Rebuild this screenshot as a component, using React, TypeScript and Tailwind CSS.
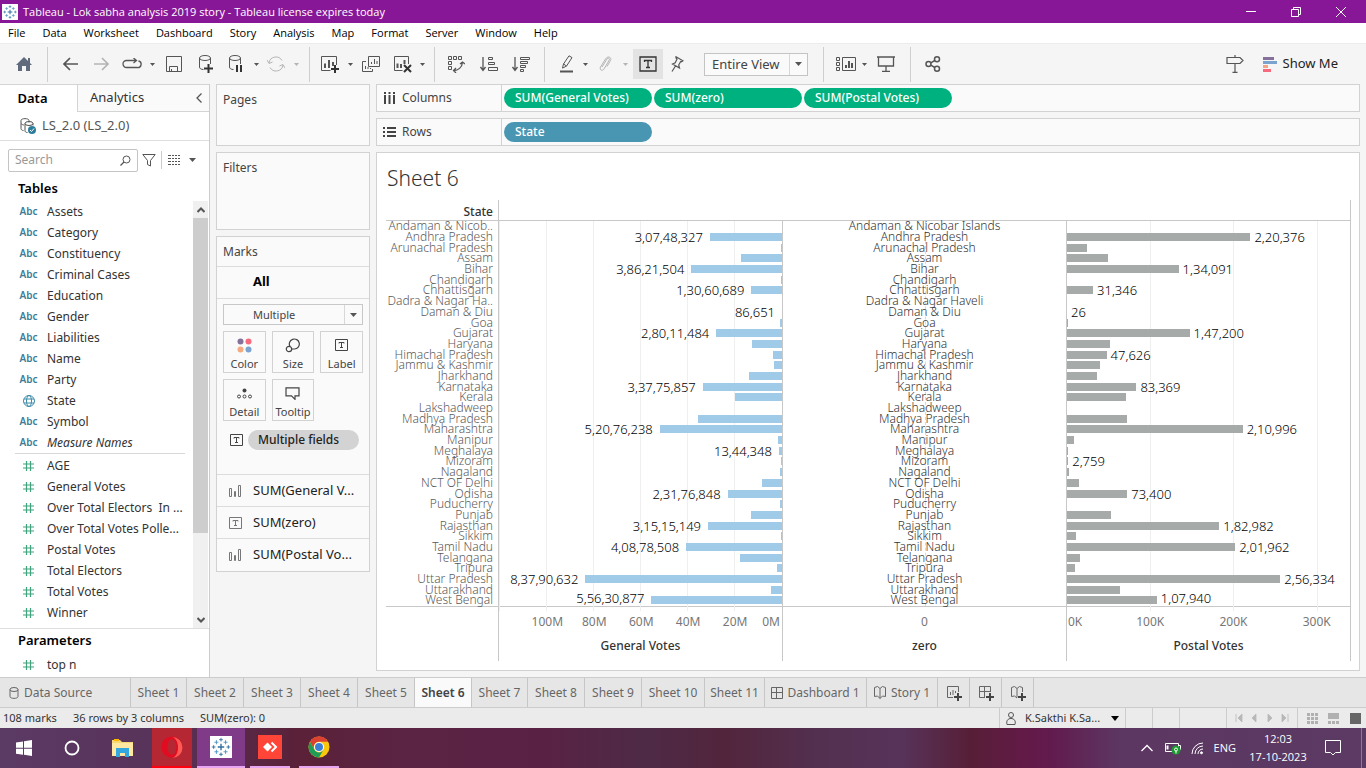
import React, { useState } from "react";

type Row = { state: string; short?: string; general: number; generalLabel?: string; postal: number; postalLabel?: string };

const rows: Row[] = [
  { state: "Andaman & Nicobar Islands", short: "Andaman & Nicob..", general: 0, postal: 0 },
  { state: "Andhra Pradesh", general: 30.75, generalLabel: "3,07,48,327", postal: 220.4, postalLabel: "2,20,376" },
  { state: "Arunachal Pradesh", general: 0.6, postal: 24 },
  { state: "Assam", general: 17.6, postal: 49 },
  { state: "Bihar", general: 38.62, generalLabel: "3,86,21,504", postal: 134.1, postalLabel: "1,34,091" },
  { state: "Chandigarh", general: 0.5, postal: 0 },
  { state: "Chhattisgarh", general: 13.06, generalLabel: "1,30,60,689", postal: 31.3, postalLabel: "31,346" },
  { state: "Dadra & Nagar Haveli", short: "Dadra & Nagar Ha..", general: 0, postal: 0 },
  { state: "Daman & Diu", general: 0, generalLabel: "86,651", postal: 0, postalLabel: "26" },
  { state: "Goa", general: 0.9, postal: 1.3 },
  { state: "Gujarat", general: 28.01, generalLabel: "2,80,11,484", postal: 147.2, postalLabel: "1,47,200" },
  { state: "Haryana", general: 12.6, postal: 51.5 },
  { state: "Himachal Pradesh", general: 3.8, postal: 47.6, postalLabel: "47,626" },
  { state: "Jammu & Kashmir", general: 3.5, postal: 39.4 },
  { state: "Jharkhand", general: 14.2, postal: 35.8 },
  { state: "Karnataka", general: 33.78, generalLabel: "3,37,75,857", postal: 83.4, postalLabel: "83,369" },
  { state: "Kerala", general: 20.2, postal: 70.9 },
  { state: "Lakshadweep", general: 0, postal: 0 },
  { state: "Madhya Pradesh", general: 36, postal: 72 },
  { state: "Maharashtra", general: 52.08, generalLabel: "5,20,76,238", postal: 211, postalLabel: "2,10,996" },
  { state: "Manipur", general: 1.7, postal: 8.5 },
  { state: "Meghalaya", general: 1.34, generalLabel: "13,44,348", postal: 1.3 },
  { state: "Mizoram", general: 0.5, postal: 1.5, postalLabel: "2,759" },
  { state: "Nagaland", general: 1, postal: 2.4 },
  { state: "NCT OF Delhi", general: 8.7, postal: 14.3 },
  { state: "Odisha", general: 23.18, generalLabel: "2,31,76,848", postal: 72.4, postalLabel: "73,400" },
  { state: "Puducherry", general: 0.8, postal: 0 },
  { state: "Punjab", general: 13.4, postal: 52.9 },
  { state: "Rajasthan", general: 31.52, generalLabel: "3,15,15,149", postal: 183, postalLabel: "1,82,982" },
  { state: "Sikkim", general: 0.4, postal: 10.7 },
  { state: "Tamil Nadu", general: 40.88, generalLabel: "4,08,78,508", postal: 202, postalLabel: "2,01,962" },
  { state: "Telangana", general: 18.1, postal: 15.7 },
  { state: "Tripura", general: 2.2, postal: 9.5 },
  { state: "Uttar Pradesh", general: 83.79, generalLabel: "8,37,90,632", postal: 256.3, postalLabel: "2,56,334" },
  { state: "Uttarakhand", general: 4.8, postal: 63.5 },
  { state: "West Bengal", general: 55.63, generalLabel: "5,56,30,877", postal: 107.9, postalLabel: "1,07,940" },
];

const GENERAL_MAX = 120.6;
const POSTAL_MAX = 340;

const Ico = ({ w = 20, h = 20, children, className = "" }: { w?: number; h?: number; children: React.ReactNode; className?: string }) => (
  <svg width={w} height={h} viewBox={`0 0 ${w} ${h}`} fill="none" stroke="currentColor" strokeWidth="1" className={`shrink-0 ${className}`} aria-hidden="true">
    {children}
  </svg>
);

const Caret = ({ label, className = "" }: { label: string; className?: string }) => (
  <button aria-label={label} className={`flex w-4 items-center justify-center ${className}`}>
    <svg width="5" height="3" viewBox="0 0 5 3" fill="currentColor" aria-hidden="true"><path d="M0 0h5L2.500 3z" /></svg>
  </button>
);

const TableauMark = ({ size }: { size: number }) => (
  <svg width={size} height={size} viewBox="0 0 24 24" className="shrink-0" aria-hidden="true">
    <rect width="24" height="24" fill="#fff" />
    <g fill="none" stroke="#2f6f9f" strokeWidth="1">
      <path d="M12 8.500v7M8.500 12h7" strokeWidth="1.500" />
      <path d="M12 2v4M10 4h4M12 18v4M10 20h4M4 10v4M2 12h4M20 10v4M18 12h4" />
      <path d="M7 4.500v4.500M4.800 6.800h4.400M17 4.500v4.500M14.800 6.800h4.400M7 15v4.500M4.800 17.200h4.400M17 15v4.500M14.800 17.200h4.400" stroke="#4b93c4" />
    </g>
  </svg>
);

const TitleBar = () => (
  <header className="flex h-[23px] shrink-0 items-center bg-[#881798] pl-[2px] text-[11px] text-white">
    <TableauMark size={16} />
    <h1 className="ml-[5px] flex-1 leading-4">Tableau - Lok sabha analysis 2019 story - Tableau license expires today</h1>
    <button aria-label="Minimize" className="flex h-full w-[45px] items-center justify-center"><Ico w={10} h={10}><path d="M0 4.500h10" /></Ico></button>
    <button aria-label="Restore" className="flex h-full w-[45px] items-center justify-center"><Ico w={10} h={10}><path d="M.5 2.500h7v7h-7zM2.500 2.500v-2h7v7h-2" /></Ico></button>
    <button aria-label="Close" className="mr-[2px] flex h-full w-[46px] items-center justify-center"><Ico w={10} h={10}><path d="M0 0l10 10M10 0L0 10" /></Ico></button>
  </header>
);

const menus = ["File", "Data", "Worksheet", "Dashboard", "Story", "Analysis", "Map", "Format", "Server", "Window", "Help"];

const MenuBar = () => (
  <nav className="flex h-5 shrink-0 items-center gap-[17px] bg-white pt-px pl-2 text-[11px] text-black">
    {menus.map((m) => <button key={m}>{m}</button>)}
  </nav>
);

const ToolButton = ({ label, className, children }: { label: string; className: string; children: React.ReactNode }) => (
  <button aria-label={label} className={`flex shrink-0 items-center justify-center ${className}`}>{children}</button>
);
const Sep = ({ className = "" }: { className?: string }) => <span className={`h-[35px] w-px shrink-0 bg-[#cfcfcf] ${className}`} />;

const Toolbar = () => (
  <div className="flex h-[41px] shrink-0 items-center border-t border-[#ececec] bg-[#f5f5f5] text-[#555]">
    <ToolButton label="Home" className="w-[47px]">
      <Ico w={18} h={16}><path d="M9 1L1 9h2v6h4v-5h4v5h4V9h2L15 7V2h-2v3z" fill="#5f6b7c" stroke="none" /></Ico>
    </ToolButton>
    <Sep />
    <ToolButton label="Undo" className="ml-2 w-7"><Ico w={16} h={14}><path d="M16 7H2M8 1L2 7l6 6" strokeWidth="1.700" /></Ico></ToolButton>
    <ToolButton label="Redo" className="ml-1 w-7 text-[#b4b4b4]"><Ico w={16} h={14}><path d="M0 7h14M8 1l6 6-6 6" strokeWidth="1.700" /></Ico></ToolButton>
    <ToolButton label="Replay" className="ml-1 w-6"><Ico w={20} h={12}><path d="M6 9.500H4.500a3.500 3.500 0 010-7H14M11.500 0l3 2.500-3 2.500M16.500 3a3.300 3.300 0 01-1.500 6.500H5" strokeWidth="1.300" /></Ico></ToolButton>
    <Caret label="Replay options" />
    <ToolButton label="Save" className="w-7"><Ico w={16} h={16}><path d="M.5.5h15v15H.5zM3.500 15.500v-5h8v5M5.500 15v-2" /></Ico></ToolButton>
    <ToolButton label="New data source" className="ml-1 w-7">
      <Ico w={16} h={20}><ellipse cx="7" cy="4" rx="5.500" ry="2.500" /><path d="M1.500 4v9c0 1.500 1.500 2.500 4 2.500M12.500 4v6" /><path d="M6 14.500h9M10.500 10v9" stroke="#333" strokeWidth="2" /></Ico>
    </ToolButton>
    <ToolButton label="Pause updates" className="ml-1 w-6">
      <Ico w={14} h={20}><ellipse cx="6" cy="4" rx="5.500" ry="2.500" /><path d="M.5 4v9c0 1.500 1.500 2.500 4 2.500M11.500 4v6" /><path d="M8 11v7M12 11v7" stroke="#333" strokeWidth="2" /></Ico>
    </ToolButton>
    <Caret label="Pause options" />
    <ToolButton label="Refresh" className="w-6 text-[#b4b4b4]">
      <Ico w={18} h={16}><path d="M2 7a7 7 0 0113-2.500M16 9a7 7 0 01-13 2.500M0 4l2 3.500L5.500 6M18 12l-2-3.500-3.500 1.500" /></Ico>
    </ToolButton>
    <Caret label="Refresh options" className="text-[#b4b4b4]" />
    <Sep className="ml-[5px]" />
    <ToolButton label="New worksheet" className="ml-2 w-6">
      <Ico w={20} h={18}><path d="M16.500 10V1.500H1.500v14h9" /><path d="M5 8.500V13M9 5v8M13 7v4" strokeWidth="2" /><path d="M11 14h8M15 10v8" stroke="#333" strokeWidth="2" /></Ico>
    </ToolButton>
    <Caret label="New worksheet options" />
    <ToolButton label="Duplicate" className="ml-px w-6">
      <Ico w={18} h={16}><path d="M6.500.5h11v10h-11zM4 5.500H.5v10h10V13" /><path d="M9.500 8V6M12.500 8V3M15 8V5M3.500 13v-3M6 13v-2M8.500 13v-1" /></Ico>
    </ToolButton>
    <ToolButton label="Clear sheet" className="ml-[6px] w-7">
      <Ico w={20} h={18}><path d="M15.500 9V1.500H1.500v14h8" /><path d="M4.500 8.500V13M8 9v4M11.500 5v4" strokeWidth="2" /><path d="M11 10l7 7M18 10l-7 7" stroke="#333" strokeWidth="2" /></Ico>
    </ToolButton>
    <Caret label="Clear options" className="-ml-[3px]" />
    <Sep className="ml-1" />
    <ToolButton label="Swap rows and columns" className="ml-[7px] w-7">
      <Ico w={18} h={18}><path d="M1.500 1.500h3v3h-3zM6.500 1.500h3v3h-3zM11.500 1.500h3v3h-3zM1.500 6.500h3v3h-3zM1.500 11.500h3v3h-3z" /><path d="M7 15.500c4 0 8-3 8.500-8M13 9l2.500-2L18 9M9 13l-2.500 2.500L9 18" strokeWidth="1.300" /></Ico>
    </ToolButton>
    <ToolButton label="Sort ascending" className="ml-[5px] w-7">
      <Ico w={18} h={16}><path d="M3 1v12M.5 11L3 14.500 5.500 11" strokeWidth="1.300" /><path d="M8.500 1.500h4v2h-4zM8.500 6.500h6v2h-6zM8.500 11.500h9v3h-9z" /></Ico>
    </ToolButton>
    <ToolButton label="Sort descending" className="ml-1 w-7">
      <Ico w={18} h={16}><path d="M3 1v12M.5 11L3 14.500 5.500 11" strokeWidth="1.300" /><path d="M8.500 1.500h9v2h-9zM8.500 5.500h7v2h-7zM8.500 9.500h5v2h-5zM8.500 13.500h3v2h-3z" /></Ico>
    </ToolButton>
    <Sep className="ml-[9px]" />
    <ToolButton label="Highlight" className="ml-2 w-7">
      <Ico w={14} h={18}><path d="M2.500 13l1-4L9 .8l3 1.800-5.500 8.500-4 2zM3.500 9l3 2" /><path d="M0 16.500h13" strokeWidth="2" /></Ico>
    </ToolButton>
    <Caret label="Highlight options" className="-ml-1" />
    <ToolButton label="Group members" className="w-6 text-[#b4b4b4]">
      <Ico w={14} h={16}><path d="M4 11l5-8c1-1.500 3-.5 2.300 1L6 13c-1.500 2.500-5 1-3.500-2l5-8C9.500-.5 14 1 12.500 4.500L9 10.500" /></Ico>
    </ToolButton>
    <Caret label="Group options" className="text-[#b4b4b4]" />
    <ToolButton label="Show mark labels" className="h-[30px] w-[30px] bg-[#e3e3e3] text-[#333]">
      <Ico w={18} h={16}><path d="M1 1h16v14H1zM5.500 6V4.500h7V6M9 4.500v7M7 11.500h4" strokeWidth="1.300" /></Ico>
    </ToolButton>
    <ToolButton label="Fix axes" className="w-7">
      <Ico w={14} h={16}><path d="M6 .8l7 4-1.500 1-.8-.3-2 3.500.8 3-7-4 2.700-1.300L7 3 6 2zM5.500 10L2 15.500" strokeWidth="1.200" /></Ico>
    </ToolButton>
    <div className="relative ml-[13px] h-[23px] w-[104px] shrink-0 border border-[#c4c4c4] bg-[#fafafa]">
      <select aria-label="Fit" className="block h-full w-full appearance-none bg-transparent pl-[7px] text-[13px] leading-5 text-[#444]"><option>Entire View</option></select>
      <span className="pointer-events-none absolute inset-y-0 right-0 flex w-[18px] items-center justify-center border-l border-[#d8d8d8]">
        <svg width="7" height="4" viewBox="0 0 7 4" fill="#555" aria-hidden="true"><path d="M0 0h7L3.500 4z" /></svg>
      </span>
    </div>
    <Sep className="ml-[15px]" />
    <ToolButton label="Show or hide cards" className="ml-2 w-7">
      <Ico w={20} h={16}><path d="M.5 1.500h3v3h-3zM.5 6.500h3v3h-3zM.5 11.500h3v3h-3zM6.500 1.500h13v13h-13z" /><path d="M10 12V9M13 12V5M16 12V7" strokeWidth="2" /></Ico>
    </ToolButton>
    <Caret label="Card options" className="-ml-1" />
    <ToolButton label="Presentation mode" className="w-7"><Ico w={18} h={16}><path d="M0 1h18M1.500 1v9h15V1M9 10v5M5 15.500h8" strokeWidth="1.300" /></Ico></ToolButton>
    <Sep className="ml-[10px]" />
    <ToolButton label="Share" className="ml-2 w-7"><Ico w={16} h={16}><g strokeWidth="1.500"><circle cx="3.500" cy="8" r="2.500" /><circle cx="12" cy="3.300" r="2.500" /><circle cx="12" cy="12.700" r="2.500" /><path d="M5.800 6.800L9.800 4.500M5.800 9.200l4 2.300" /></g></Ico></ToolButton>
    <ToolButton label="Data guide" className="mr-[14px] ml-auto w-7">
      <Ico w={18} h={18}><path d="M1 2.500h13l3 3-3 3H1zM9 0v2.500M9 8.500V17M6.500 17.300h5" strokeWidth="1.200" /></Ico>
    </ToolButton>
    <button className="mr-7 flex items-center gap-[6px] text-[13px] text-[#222]">
      <Ico w={14} h={15}><g stroke="none"><path d="M0 0h11v3H0z" fill="#85709a" /><path d="M0 4h14v3H0z" fill="#7ba3cf" /><path d="M0 8h5v3H0z" fill="#f4a582" /><path d="M0 12h8v3H0z" fill="#f8697d" /></g></Ico>
      Show Me
    </button>
  </div>
);

const dims: { kind: "abc" | "globe"; name: string; italic?: boolean }[] = [
  { kind: "abc", name: "Assets" }, { kind: "abc", name: "Category" }, { kind: "abc", name: "Constituency" },
  { kind: "abc", name: "Criminal Cases" }, { kind: "abc", name: "Education" }, { kind: "abc", name: "Gender" },
  { kind: "abc", name: "Liabilities" }, { kind: "abc", name: "Name" }, { kind: "abc", name: "Party" },
  { kind: "globe", name: "State" }, { kind: "abc", name: "Symbol" }, { kind: "abc", name: "Measure Names", italic: true },
];
const measures = ["AGE", "General Votes", "Over Total Electors  In ...", "Over Total Votes Polle...", "Postal Votes", "Total Electors", "Total Votes", "Winner"];

const Hash = () => <Ico w={12} h={10} className="text-[#3fa37c]"><path d="M3.500 0v10M7.500 0v10M0 3h11M0 7h11" strokeWidth="1.200" /></Ico>;

const Field = ({ icon, children }: { icon: React.ReactNode; children: React.ReactNode }) => (
  <li className="flex h-[21px] items-center text-xs">
    <span className="flex w-[37px] shrink-0 justify-center">{icon}</span>
    <span className="flex-1 whitespace-pre">{children}</span>
  </li>
);

const DataPane = () => (
  <aside className="flex w-[210px] shrink-0 flex-col border-r border-[#cccccc] bg-white text-[13px] text-[#333]">
    <div className="flex h-7 shrink-0">
      <button className="w-[77px] border-t border-[#d4d4d4] pr-4 pl-1 font-semibold text-black">Data</button>
      <div className="flex flex-1 items-center justify-between border border-r-0 border-[#d4d4d4] bg-[#fafafa]">
        <button className="pl-3">Analytics</button>
        <button aria-label="Collapse" className="flex w-5 justify-center text-[#555]"><Ico w={6} h={10}><path d="M5.500.5L1 5l4.500 4.500" strokeWidth="1.300" /></Ico></button>
      </div>
    </div>
    <div className="flex h-[29px] shrink-0 items-center gap-1 border-b border-[#dedede] pb-px pl-5 text-[#555]">
      <Ico w={18} h={18}>
        <path d="M1 3.500C1 1 9 1 9 3.500v2M1 3.500v8c0 1 1 2 2.500 2M1 6.500c1 1 2 1.500 3 1.500" /><ellipse cx="9" cy="6.500" rx="4" ry="2" /><path d="M5 6.500v7c0 1.500 1 2 2.500 2M13 6.500v2" />
        <circle cx="12" cy="13" r="4" fill="#2e7d9c" stroke="none" /><path d="M10 13l1.500 1.500L14 11.500" stroke="#fff" />
      </Ico>
      LS_2.0 (LS_2.0)
    </div>
    <div className="mt-[7px] flex h-6 shrink-0 items-center pl-2 text-[#555]">
      <label className="flex h-[23px] w-[130px] items-center rounded-xs border border-[#c4c4c4] pr-[6px] pl-[6px] text-xs">
        <input type="text" aria-label="Search fields" placeholder="Search" className="w-full min-w-0 flex-1 bg-transparent placeholder:text-[#999]" />
        <Ico w={11} h={11}><circle cx="6.500" cy="4.500" r="3.500" /><path d="M4 7L.5 10.500" strokeWidth="1.300" /></Ico>
      </label>
      <button aria-label="Filter fields" className="ml-1"><Ico w={14} h={13}><path d="M.8.500h12.400L8.500 6.500v5.500l-3-1.500v-4z" /></Ico></button>
      <span className="ml-[5px] h-[18px] w-px bg-[#ccc]" />
      <button aria-label="View as list" className="ml-[6px]"><Ico w={12} h={10}><path d="M0 .5h12M0 3.500h12M0 6.500h12M0 9.500h12" strokeDasharray="3 1 2 1 2 1 2" /></Ico></button>
      <button aria-label="Menu" className="ml-[9px]"><svg width="7" height="4" viewBox="0 0 7 4" fill="currentColor" aria-hidden="true"><path d="M0 0h7L3.500 4z" /></svg></button>
    </div>
    <h2 className="mt-[6px] h-[23px] shrink-0 pl-[18px] leading-5 font-semibold text-black">Tables</h2>
    <div className="flex min-h-0 flex-1">
      <div className="min-w-0 flex-1 pl-[10px]">
        <ul>
          {dims.map((d) => (
            <Field key={d.name} icon={d.kind === "abc"
              ? <span className="text-[10px] font-semibold text-[#3c7d99]">Abc</span>
              : <Ico w={12} h={12} className="text-[#3c8aa8]"><circle cx="6" cy="6" r="5.500" /><ellipse cx="6" cy="6" rx="2.500" ry="5.500" /><path d="M1 4h10M1 8h10" /></Ico>}>
              <span className={d.italic ? "italic" : ""}>{d.name}</span>
            </Field>
          ))}
        </ul>
        <hr className="mr-2 mb-px ml-[5px] border-[#d8d8d8]" />
        <ul>{measures.map((m) => <Field key={m} icon={<Hash />}>{m}</Field>)}</ul>
      </div>
      <div className="mr-px flex w-[15px] flex-col bg-[#f0f0f0] text-[#555]">
        <button aria-label="Scroll up" className="flex h-[17px] items-center justify-center"><Ico w={8} h={6}><path d="M.5 5L4 1.500 7.500 5" strokeWidth="2" /></Ico></button>
        <span className="h-[315px] bg-[#cdcdcd]" />
        <button aria-label="Scroll down" className="mt-auto flex h-[17px] items-center justify-center"><Ico w={8} h={6}><path d="M.5 1L4 4.500 7.500 1" strokeWidth="2" /></Ico></button>
      </div>
    </div>
    <section className="h-[49px] shrink-0 border-t border-[#dedede]">
      <h2 className="h-[25px] pl-[18px] leading-[22px] font-semibold text-black">Parameters</h2>
      <ul className="pl-[10px]"><Field icon={<Hash />}>top n</Field></ul>
    </section>
  </aside>
);

const card = "border border-[#d2d2d2] bg-[#fafafa]";

const TBox = () => <Ico w={13} h={12}><path d="M.5.5h12v11H.5zM4 4.500v-1h5v1M6.500 3.500v5M5 8.500h3" /></Ico>;
const BarsIco = () => <Ico w={14} h={12}><path d="M1.500 3.500h2v8h-2zM6.500 6.500h1v5h-1zM10.500.5h2v11h-2z" /></Ico>;

const MarkButton = ({ label, children }: { label: string; children: React.ReactNode }) => (
  <button className="flex h-[42px] flex-col items-center justify-between border border-[#d2d2d2] pt-[5px] text-[11px] leading-4">
    <span className="flex h-4 items-center">{children}</span>
    {label}
  </button>
);

const Cards = () => (
  <div className="ml-[6px] flex w-[154px] shrink-0 flex-col gap-[6px] text-[12px] text-[#444]">
    <section className={`h-[62px] px-[6px] pt-[6px] ${card}`}><h2 className="leading-[18px]">Pages</h2></section>
    <section className={`h-[78px] px-[6px] pt-[6px] ${card}`}><h2 className="leading-[18px]">Filters</h2></section>
    <section className={card}>
      <h2 className="h-[30px] border-b border-[#dcdcdc] px-[6px] leading-[30px]">Marks</h2>
      <div className="h-8 border-b border-[#dcdcdc] pl-9 text-[13px] leading-7 font-bold text-black">All</div>
      <div className="h-[176px] border-b border-[#dcdcdc] px-[6px] pt-[5px]">
        <div className="relative h-[21px] border border-[#c8c8c8]">
          <select aria-label="Mark type" className="block h-full w-full appearance-none bg-transparent pl-[29px] text-[11px] leading-4"><option>Multiple</option></select>
          <span className="pointer-events-none absolute inset-y-0 right-0 flex w-[18px] items-center justify-center border-l border-[#d8d8d8]">
            <svg width="7" height="4" viewBox="0 0 7 4" fill="#555" aria-hidden="true"><path d="M0 0h7L3.500 4z" /></svg>
          </span>
        </div>
        <div className="mt-[6px] grid grid-cols-3 gap-[6px]">
          <MarkButton label="Color"><Ico w={15} h={15}><g stroke="none"><circle cx="3.500" cy="3.500" r="3" fill="#85709a" /><circle cx="11.500" cy="3.500" r="3" fill="#f8697d" /><circle cx="3.500" cy="11.500" r="3" fill="#f4a97f" /><circle cx="11.500" cy="11.500" r="3" fill="#7ba3cf" /></g></Ico></MarkButton>
          <MarkButton label="Size"><Ico w={16} h={15}><path d="M5 8.500A5 5 0 119.500 11H7" strokeWidth="1.200" /><circle cx="4" cy="11" r="2.700" strokeWidth="1.200" /></Ico></MarkButton>
          <MarkButton label="Label"><TBox /></MarkButton>
          <MarkButton label="Detail"><Ico w={15} h={13}><circle cx="7.500" cy="3.500" r="2" fill="currentColor" stroke="none" /><circle cx="2" cy="9.500" r="1.500" /><circle cx="7.500" cy="9.500" r="1.500" /><circle cx="13" cy="9.500" r="1.500" /></Ico></MarkButton>
          <MarkButton label="Tooltip"><Ico w={15} h={13}><path d="M1 .8h13v8h-4v3.500L6.500 8.800H1z" strokeWidth="1.200" /></Ico></MarkButton>
        </div>
        <div className="mt-[9px] flex items-center gap-[5px] pl-[7px]">
          <TBox />
          <button className="h-5 w-[111px] rounded-full bg-[#d3d3d3] pr-[10px] font-medium text-[#222]">Multiple fields</button>
        </div>
      </div>
      {[["bars", "SUM(General V..."], ["text", "SUM(zero)"], ["bars", "SUM(Postal Vo..."]].map(([kind, label]) => (
        <div key={label} className="flex h-8 items-center border-b border-[#dcdcdc] text-[13px] text-[#222] last:border-b-0">
          <span className="flex w-9 justify-center text-[#777]">{kind === "bars" ? <BarsIco /> : <TBox />}</span>
          {label}
        </div>
      ))}
    </section>
  </div>
);

const Shelf = ({ label, icon, pills, color }: { label: string; icon: React.ReactNode; pills: string[]; color: string }) => (
  <section className={`flex h-7 shrink-0 ${card}`}>
    <h2 className="flex w-[125px] shrink-0 items-center gap-[6px] border-r border-[#d2d2d2] pl-[6px] text-[12px] text-[#444]">{icon}{label}</h2>
    <div className="flex items-center gap-[2px] pl-[2px]">
      {pills.map((p) => <button key={p} className={`h-5 w-[148px] rounded-full pl-[11px] text-left text-[12px] font-medium text-white ${color}`}>{p}</button>)}
    </div>
  </section>
);

const gridlines = (side: "left" | "right", max: number, ticks: number[]) =>
  ticks.map((t) => (
    <span key={t} className="absolute top-0 -bottom-[5px] w-px bg-[#efefef]" style={{ [side]: `${(t / max) * 100}%` }} />
  ));

const COLS = "grid grid-cols-[113px_1fr_1fr_1fr]";

const Chart = () => (
  <div className="flex min-h-0 flex-1 flex-col text-[12px]">
    <div className={`h-5 ${COLS}`}>
      <div className="border-r border-[#c8c8c8] pr-[5px] text-right leading-6 font-medium text-[#333]">State</div>
      <div className="col-span-3 border-r border-[#c8c8c8]" />
    </div>
    <div className={`relative min-h-0 flex-1 border-y border-[#c8c8c8] ${COLS}`}>
      <div className="flex min-h-0 flex-col border-r border-[#c8c8c8] pr-[5px] text-right font-light text-[#5a5a5a]">
        {rows.map((r) => <div key={r.state} className="flex min-h-0 flex-1 items-center justify-end leading-3 whitespace-nowrap">{r.short ?? r.state}</div>)}
      </div>
      <div className="relative flex min-h-0 flex-col border-r border-[#c8c8c8]">
        {gridlines("right", GENERAL_MAX, [20, 40, 60, 80, 100, 120])}
        {rows.map((r) => (
          <div key={r.state} className="relative flex min-h-0 flex-1 items-center justify-end gap-[7px] last:items-end">
            {r.generalLabel && <span className="text-[13px] leading-4 font-light text-black">{r.generalLabel}</span>}
            <span className="h-2 self-center bg-[#9fcae8]" style={{ width: `${(r.general / GENERAL_MAX) * 100}%` }} />
          </div>
        ))}
      </div>
      <div className="relative flex min-h-0 flex-col border-r border-[#c8c8c8] font-light text-[#333]">
        <span className="absolute inset-y-0 left-1/2 border-l border-dashed border-[#d8d8d8]" />
        {rows.map((r) => <div key={r.state} className="relative flex min-h-0 flex-1 items-center justify-center leading-3 whitespace-nowrap">{r.state}</div>)}
      </div>
      <div className="relative flex min-h-0 flex-col border-r border-[#c8c8c8]">
        {gridlines("left", POSTAL_MAX, [100, 200, 300])}
        {rows.map((r) => (
          <div key={r.state} className="relative flex min-h-0 flex-1 items-center gap-1 last:items-end">
            <span className="h-2 self-center bg-[#a6abaa]" style={{ width: `${(r.postal / POSTAL_MAX) * 100}%` }} />
            {r.postalLabel && <span className="text-[13px] leading-4 font-light text-black">{r.postalLabel}</span>}
          </div>
        ))}
      </div>
    </div>
    <div className={`h-[54px] ${COLS} text-center text-[#777]`}>
      <div className="border-r border-[#c8c8c8]" />
      <div className="relative border-r border-[#c8c8c8] pt-[31px]">
        {[20, 40, 60, 80, 100].map((t) => <span key={t} className="absolute top-[7px] w-12 translate-x-1/2 leading-4" style={{ right: `${(t / GENERAL_MAX) * 100}%` }}>{t}M</span>)}
        <span className="absolute top-[7px] right-[2px] leading-4">0M</span>
        <div className="leading-4 font-medium text-[#333]">General Votes</div>
      </div>
      <div className="border-r border-[#c8c8c8] pt-[7px]">
        <div className="leading-4">0</div>
        <div className="mt-2 leading-4 font-medium text-[#333]">zero</div>
      </div>
      <div className="relative border-r border-[#c8c8c8] pt-[31px]">
        {[100, 200, 300].map((t) => <span key={t} className="absolute top-[7px] w-12 -translate-x-1/2 leading-4" style={{ left: `${(t / POSTAL_MAX) * 100}%` }}>{t}K</span>)}
        <span className="absolute top-[7px] left-px leading-4">0K</span>
        <div className="leading-4 font-medium text-[#333]">Postal Votes</div>
      </div>
    </div>
  </div>
);

const Plus = () => <path d="M9 13h8M13 9v8" stroke="#444" strokeWidth="2" />;
const GridIco = () => <Ico w={12} h={12}><path d="M.5.5h11v11H.5zM5.500.5v11M.5 5.500h11" /></Ico>;
const BookIco = () => <Ico w={12} h={13}><path d="M.5 1.500L3.500.5 6 2.500 8.500.5l3 1v9l-3-.5L6 12.500 3.500 10l-3 .5zM6 2.500v10" /></Ico>;
const tab = "flex shrink-0 items-center justify-center border-r border-[#c6c6c6]";
const sheetWidth = (n: number) => (n === 10 ? "w-[63px]" : n === 11 ? "w-[60px]" : n === 1 || n === 7 ? "w-[56px]" : "w-[57px]");

const SheetTabs = () => {
  const [active, setActive] = useState(6);
  return (
    <nav className="flex h-[31px] shrink-0 border-y border-[#cccccc] bg-[#e6e6e6] text-[12px] text-[#666]">
      <button className={`${tab} w-[131px] !justify-start gap-[5px] pl-[9px]`}>
        <Ico w={10} h={12}><ellipse cx="5" cy="2.500" rx="4" ry="2" /><path d="M1 2.500v7c0 2.500 8 2.500 8 0v-7" /></Ico>Data Source
      </button>
      {Array.from({ length: 11 }, (_, i) => i + 1).map((n) => (
        <button key={n} onClick={() => setActive(n)} className={`${tab} ${sheetWidth(n)} ${n === active ? "bg-[#fafafa] font-semibold text-[#444]" : ""}`}>Sheet {n}</button>
      ))}
      <button className={`${tab} w-[102px] gap-1`}><GridIco />Dashboard 1</button>
      <button className={`${tab} w-[71px] gap-[5px]`}><BookIco />Story 1</button>
      <button aria-label="New worksheet" className={`${tab} w-8`}><Ico w={18} h={18}><path d="M13.500 8V2.500H2.500v11H8M5.500 11V8M8 11V6M10.500 9V7" /><Plus /></Ico></button>
      <button aria-label="New dashboard" className={`${tab} w-8`}><Ico w={18} h={18}><path d="M13.500 8V2.500H2.500v11H8M7.500 2.500v11M2.500 7.500h11" /><Plus /></Ico></button>
      <button aria-label="New story" className={`${tab} w-8`}><Ico w={18} h={18}><path d="M2.500 3.500l3-1L8 4.500l2.500-2 3 1V8M2.500 3.500v9l3-.5L8 14M8 4.500v9" /><Plus /></Ico></button>
    </nav>
  );
};

const StatusBar = () => (
  <footer className="flex h-5 shrink-0 items-center bg-[#ebebeb] text-[11px] text-[#333]">
    <span className="w-[73px] pl-[3px]">108 marks</span>
    <span className="w-[127px]">36 rows by 3 columns</span>
    <span className="flex-1">SUM(zero): 0</span>
    <button className="flex h-full w-[127px] items-center border-x border-[#ccc] pl-[6px]">
      <Ico w={10} h={13} className="text-[#555]"><circle cx="5" cy="3" r="2.500" /><path d="M1 12.500c-1-4 1-6 4-6s5 2 4 6z" /></Ico>
      <span className="ml-[9px]">K.Sakthi K.Sa...</span>
      <svg className="ml-auto mr-[6px]" width="8" height="5" viewBox="0 0 8 5" aria-hidden="true"><path d="M0 0h8L4 5z" /></svg>
    </button>
    <span className="h-full w-[27px] border-r border-[#ccc]" />
    <span className="h-full w-[27px] border-r border-[#ccc]" />
    <span className="h-full w-[47px] border-r border-[#ccc]" />
    <div className="flex h-full w-[71px] items-center justify-around border-r border-[#ccc] px-1 text-[#b8b8b8]">
      {[["First", "M1 0v8M7 0L3 4l4 4z"], ["Previous", "M6 0L2 4l4 4z"], ["Next", "M2 0l4 4-4 4z"], ["Last", "M7 0v8M1 0l4 4-4 4z"]].map(([l, d]) => (
        <button key={l} aria-label={l}><svg width="8" height="8" viewBox="0 0 8 8" fill="currentColor" stroke="currentColor" strokeWidth=".8" aria-hidden="true"><path d={d} /></svg></button>
      ))}
    </div>
    <div className="flex w-[68px] items-center justify-around pl-1 text-[#b0b0b0]">
      <button aria-label="Sheet sorter"><Ico w={11} h={11}><path d="M0 1.500h11M0 5.500h11M0 9.500h11" strokeWidth="3" strokeDasharray="3 1" /></Ico></button>
      <button aria-label="Filmstrip"><Ico w={11} h={11}><path d="M0 3h11" strokeWidth="6" /><path d="M0 9.500h11" strokeWidth="3" strokeDasharray="3 1" /></Ico></button>
      <button aria-label="Tabs"><Ico w={11} h={11}><path d="M0 0h11v11H0z" fill="#666" stroke="none" /></Ico></button>
    </div>
  </footer>
);

const Taskbar = () => (
  <div className="flex h-10 shrink-0 items-center bg-[linear-gradient(90deg,#5b3a64_0%,#58335a_11%,#5a2138_22%,#5b2444_30%,#592245_40%,#4e2a47_47%,#52253c_53%,#533050_60%,#57335a_66%,#571f37_71%,#621a47_75%,#621b4e_77%,#5c3762_82%,#5b3a64_100%)] text-white">
    <button aria-label="Start" className="flex w-12 justify-center"><Ico w={16} h={16}><path d="M0 2.500l7-1v6.200H0zM8 1.300L16 0v7.700H8zM0 8.700h7v6.100l-7-1zM8 8.700h8V16l-8-1.200z" fill="#fff" stroke="none" /></Ico></button>
    <button aria-label="Search" className="flex w-12 justify-center"><Ico w={16} h={16}><circle cx="8" cy="8" r="6.500" strokeWidth="1.800" /></Ico></button>
    <button aria-label="File Explorer" className="ml-[2px] flex w-[50px] justify-center">
      <Ico w={22} h={20}><g stroke="none"><path d="M0 2h8l2 2h11v14H0z" fill="#f8d775" /><path d="M0 5h21v13H0z" fill="#ffe9a2" /><path d="M2 1h5v2H2z" fill="#ffb900" /><path d="M4 10h13v9h-4v-4H8v4H4z" fill="#35a7e0" /></g></Ico>
    </button>
    <button aria-label="Opera" className="ml-1 flex h-full w-10 items-center justify-center border-b-2 border-[#ff0010] bg-[#b42733]">
      <Ico w={22} h={22}><ellipse cx="11" cy="11" rx="10.500" ry="10.500" fill="#e30b20" stroke="none" /><path d="M11 1a10 10 0 010 21c8-2 8-19 0-21z" fill="#ff5a55" stroke="none" /><ellipse cx="11" cy="11" rx="4.500" ry="8" fill="#b42733" stroke="none" /></Ico>
    </button>
    <button aria-label="Tableau" className="ml-[5px] flex h-full w-[48px] items-center justify-center border-b-2 border-[#e8a5f2] bg-[#7f3b87]"><TableauMark size={22} /></button>
    <button aria-label="AnyDesk" className="ml-[5px] flex h-full w-10 items-center justify-center border-b-2 border-[#e8a5f2]">
      <Ico w={24} h={24}><path d="M0 0h24v24H0z" fill="#ff4438" stroke="none" /><path d="M9.500 7.500L14 12l-4.500 4.500L5 12z" fill="#fff" stroke="none" /><path d="M13.500 7.500L18 12l-4.500 4.500" stroke="#fff" strokeWidth="2" /></Ico>
    </button>
    <button aria-label="Chrome" className="ml-[9px] flex h-full w-10 items-center justify-center border-b-2 border-[#e8a5f2]">
      <Ico w={22} h={22}><g stroke="none"><circle cx="11" cy="11" r="10.500" fill="#f9c80e" /><path d="M1.900 5.800A10.500 10.500 0 0120.100 5.800H11a5.200 5.200 0 00-4.500 8z" fill="#dd4132" /><path d="M1.900 5.800L6.500 13.800A5.200 5.200 0 0015.500 13.800L11 21.500A10.500 10.500 0 011.900 5.800z" fill="#1f9d57" /><circle cx="11" cy="11" r="5" fill="#fff" /><circle cx="11" cy="11" r="4" fill="#3d7fd6" /></g></Ico>
    </button>
    <div className="ml-auto flex h-full items-center text-[11px]">
      <button aria-label="Hidden icons"><Ico w={12} h={8}><path d="M.5 7L6 1.500 11.500 7" strokeWidth="1.300" /></Ico></button>
      <button aria-label="Battery" className="ml-3"><Ico w={17} h={14}><path d="M.5 2.500h13v8H.5zM14 4.500h1.500v4H14" /><path d="M2.500 4.500v4" strokeWidth="2" /><circle cx="11" cy="9" r="4.500" fill="#1b9a2f" stroke="none" /><circle cx="11" cy="8.500" r="1.500" /><path d="M11 10v2.500" /></Ico></button>
      <button aria-label="Wi-Fi" className="ml-[9px]"><Ico w={13} h={13}><path d="M1 12A11 11 0 0112 1M4 12a8 8 0 018-8M7 12a5 5 0 015-5" /><circle cx="10.500" cy="10.800" r="1" fill="#fff" /></Ico></button>
      <button className="ml-[10px]">ENG</button>
      <button className="ml-3 w-[60px] text-center leading-[18px] whitespace-nowrap"><span className="block">12:03</span><span className="block">17-10-2023</span></button>
      <button aria-label="Notifications" className="ml-[17px]"><Ico w={16} h={16}><path d="M.5.5h15v12h-5L8 15l-2.500-2.500h-5z" /></Ico></button>
      <span className="mr-1 ml-5 h-full w-px bg-[#8f7a94]" />
    </div>
  </div>
);

export default function App() {
  return (
    <div className="flex h-screen min-w-[1100px] flex-col overflow-hidden bg-[#f5f5f5] font-['Open_Sans',sans-serif]">
      <TitleBar />
      <MenuBar />
      <div className="flex min-h-0 flex-1 flex-col font-['Noto_Sans',sans-serif]">
        <Toolbar />
        <main className="flex min-h-0 flex-1">
          <DataPane />
          <Cards />
          <div className="mx-[6px] flex min-w-0 flex-1 flex-col gap-[6px] pb-[6px]">
            <Shelf label="Columns" pills={["SUM(General Votes)", "SUM(zero)", "SUM(Postal Votes)"]} color="bg-[#00b180]" icon={<Ico w={13} h={12}><path d="M2 0v2M6.500 0v2M11 0v2M2 3v9M6.500 3v9M11 3v9" strokeWidth="2" /></Ico>} />
            <Shelf label="Rows" pills={["State"]} color="bg-[#4996b2]" icon={<Ico w={13} h={12}><path d="M0 2h2M0 6h2M0 10h2M4 2h9M4 6h9M4 10h9" strokeWidth="2" /></Ico>} />
            <section className="flex min-h-0 flex-1 flex-col border border-[#d2d2d2] bg-white pt-[10px] pr-2 pb-[9px] pl-[9px]">
              <h2 className="h-[37px] pl-px text-[21px] leading-[30px] font-light text-[#333]">Sheet 6</h2>
              <Chart />
            </section>
          </div>
        </main>
        <SheetTabs />
        <StatusBar />
      </div>
      <Taskbar />
    </div>
  );
}
